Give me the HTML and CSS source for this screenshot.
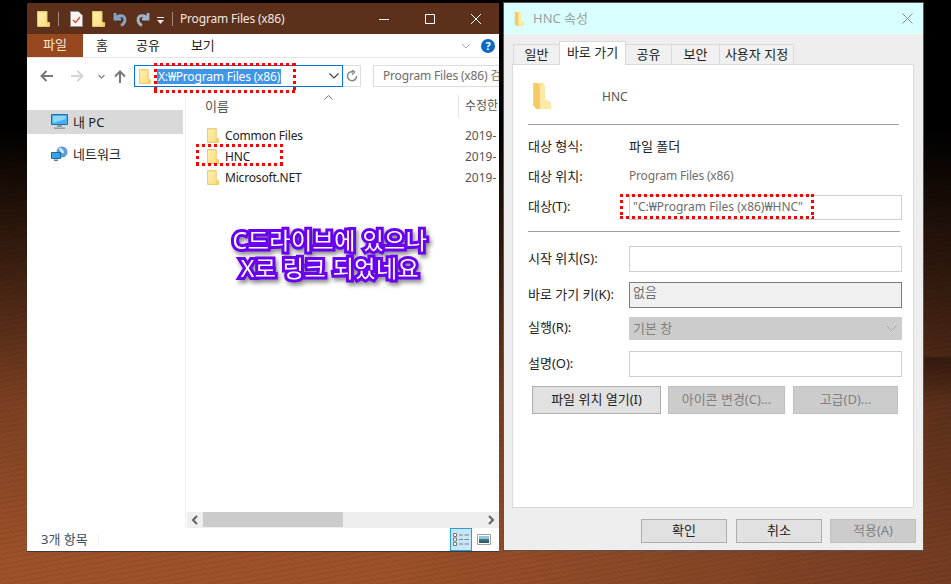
FILE: index.html
```html
<!DOCTYPE html>
<html lang="ko">
<head>
    <meta charset="UTF-8">
    <meta name="viewport" content="width=device-width, initial-scale=1.0">
    <title>HNC 속성</title>
    <link rel="stylesheet" href="styles.css">
</head>
<body>
    <!-- shared icons -->
    <svg class="defs" width="0" height="0">
        <defs>
            <linearGradient id="folder-fill" x1="0" y1="0" x2="1" y2="1">
                <stop offset="0" stop-color="#fff0b0"/>
                <stop offset="1" stop-color="#fbdc7c"/>
            </linearGradient>
            <symbol id="folder" viewBox="0 0 13 16">
                <path d="M.5.5h9.500v11h2.500v4h-12z" fill="url(#folder-fill)" stroke="#e6c568"/>
                <path d="M10 11.500v4h2.500v-4z" fill="#f3cf68"/>
                <path d="M.5.5h9.500v1h-9.500z" fill="#f0d588"/>
            </symbol>
            <symbol id="big-folder" viewBox="0 0 18 27">
                <path d="M0 0h10l2 3v14l6 3v7H3l-3-4z" fill="#fbdf8e"/>
                <path d="M0 0h4l3 3v24H3l-3-4z" fill="#f3ca66"/>
                <path d="M10 0l2 3v14l6 3v7H7V3z" fill="#fde9a8"/>
            </symbol>
        </defs>
    </svg>

    <div class="desktop">
        <!-- explorer window -->
        <div class="explorer">
            <div class="ex-title">
                <svg class="qa-folder" width="13" height="16"><use href="#folder"/></svg>
                <span class="qa-sep"></span>
                <svg class="qa-doc" width="13" height="16" viewBox="0 0 13 16">
                    <path d="M.5.5h8l4 4v11H.5z" fill="#f6f6f6" stroke="#9a8f88"/>
                    <path d="M3 9l2.500 2.500L10 6" fill="none" stroke="#e0502a" stroke-width="1.500"/>
                </svg>
                <svg class="qa-folder2" width="13" height="16"><use href="#folder"/></svg>
                <svg class="qa-undo" width="14" height="16" viewBox="0 0 14 16">
                    <path d="M2 2v6h6M3 7.500C5 3.500 12 3.500 12 9c0 3-2 4.500-4 5.500" fill="none" stroke="#84a5c8" stroke-width="2.800"/>
                </svg>
                <svg class="qa-redo" width="14" height="16" viewBox="0 0 14 16">
                    <path d="M12 2v6H6M11 7.500C9 3.500 2 3.500 2 9c0 3 2 4.500 4 5.500" fill="none" stroke="#9db4cc" stroke-width="2.800"/>
                </svg>
                <svg class="qa-more" width="7" height="7" viewBox="0 0 7 7">
                    <path d="M0 0h7v1H0zM0 3h7L3.500 7z" fill="#e8e8e8"/>
                </svg>
                <span class="qa-sep qa-sep2"></span>
                <span class="ex-name">Program Files (x86)</span>
                <div class="win-btns">
                    <svg width="12" height="12" viewBox="0 0 12 12"><path d="M1 6.500h10" stroke="#fff"/></svg>
                    <svg width="12" height="12" viewBox="0 0 12 12"><path d="M1.500 1.500h9v9h-9z" fill="none" stroke="#fff"/></svg>
                    <svg width="12" height="12" viewBox="0 0 12 12"><path d="M1 1l10 10M11 1L1 11" stroke="#fff"/></svg>
                </div>
            </div>

            <div class="ribbon">
                <span class="tab-file">파일</span>
                <span class="tab tab-home">홈</span>
                <span class="tab tab-share">공유</span>
                <span class="tab tab-view">보기</span>
                <svg class="rib-chev" width="10" height="6" viewBox="0 0 10 6"><path d="M1 1l4 4 4-4" fill="none" stroke="#a8a8a8"/></svg>
                <span class="help">?</span>
            </div>

            <div class="addr-row">
                <svg class="nav-arrow" width="14" height="12" viewBox="0 0 14 12"><path d="M13 6H2M6.500 1L1.500 6l5 5" fill="none" stroke="#777" stroke-width="2"/></svg>
                <svg class="nav-arrow fwd" width="14" height="12" viewBox="0 0 14 12"><path d="M1 6h11M7.500 1l5 5-5 5" fill="none" stroke="#d4d4d4" stroke-width="2"/></svg>
                <svg class="nav-down" width="7" height="5" viewBox="0 0 7 5"><path d="M.5 1l3 3 3-3" fill="none" stroke="#888" stroke-width="1.300"/></svg>
                <svg class="nav-up" width="12" height="13" viewBox="0 0 12 13"><path d="M6 13V2M1 6.500l5-5 5 5" fill="none" stroke="#777" stroke-width="2"/></svg>
                <div class="addr-box">
                    <svg width="12" height="15"><use href="#folder"/></svg>
                    <span class="addr-sel">X:₩Program Files (x86)</span>
                    <svg class="addr-chev" width="10" height="6" viewBox="0 0 10 6"><path d="M.5.5L5 5 9.500.5" fill="none" stroke="#444" stroke-width="1.200"/></svg>
                </div>
                <div class="refresh">
                    <svg width="12" height="12" viewBox="0 0 12 12"><path d="M7 1.800A4.500 4.500 0 1 0 10.500 6M6 0l2.500 2L6 4.500" fill="none" stroke="#888" stroke-width="1.500"/></svg>
                </div>
                <div class="search">Program Files (x86) 검</div>
            </div>

            <div class="ex-body">
                <div class="nav-pane">
                    <div class="nav-item selected">
                        <svg width="17" height="16" viewBox="0 0 17 16">
                            <path d="M.5.5h16v10H.5z" fill="#43b0f0" stroke="#2a6d9c"/>
                            <path d="M2 2h13v3L2 9z" fill="#8fd6fb"/>
                            <path d="M6 11h5v2H6zM3 13.500h11v1.500H3z" fill="#8ea0ae"/>
                        </svg>
                        <span>내 PC</span>
                    </div>
                    <div class="nav-item network">
                        <svg width="17" height="16" viewBox="0 0 17 16">
                            <circle cx="11" cy="6" r="5.500" fill="#5f9fd8"/>
                            <path d="M8 2c3 0 5 2 5 5-2 1-5-2-5-5z" fill="#cfe6f7"/>
                            <path d="M.5 6.500h9v6h-9z" fill="#3aa3e6" stroke="#1e6a9c"/>
                            <path d="M3 13.500h4v1.500H3z" fill="#5b7f99"/>
                        </svg>
                        <span>네트워크</span>
                    </div>
                </div>
                <div class="main-pane">
                    <div class="col-head">
                        <span class="col-name">이름</span>
                        <svg class="sort-caret" width="9" height="5" viewBox="0 0 9 5"><path d="M.5 4.500l4-4 4 4" fill="none" stroke="#777"/></svg>
                        <span class="col-date">수정한</span>
                    </div>
                    <div class="file-list">
                        <div class="file-row">
                            <svg width="12" height="15"><use href="#folder"/></svg>
                            <span class="file-name">Common Files</span>
                            <span class="file-date">2019-</span>
                        </div>
                        <div class="file-row">
                            <svg width="12" height="15"><use href="#folder"/></svg>
                            <span class="file-name">HNC</span>
                            <span class="file-date">2019-</span>
                        </div>
                        <div class="file-row">
                            <svg width="12" height="15"><use href="#folder"/></svg>
                            <span class="file-name">Microsoft.NET</span>
                            <span class="file-date">2019-</span>
                        </div>
                    </div>
                    <div class="hscroll">
                        <svg width="16" height="16" viewBox="0 0 16 16"><path d="M10 4L6 8l4 4" fill="none" stroke="#606060" stroke-width="2"/></svg>
                        <div class="hscroll-track"><div class="hscroll-thumb"></div></div>
                        <svg width="16" height="16" viewBox="0 0 16 16"><path d="M6 4l4 4-4 4" fill="none" stroke="#606060" stroke-width="2"/></svg>
                    </div>
                </div>
            </div>

            <div class="status">
                <span class="status-text">3개 항목</span>
                <span class="status-sep"></span>
                <div class="view-btn active">
                    <svg width="16" height="13" viewBox="0 0 16 13">
                        <path d="M.5.5h3v3h-3zM.5 5h3v3h-3zM.5 9.500h3v3h-3z" fill="#fff" stroke="#777"/>
                        <path d="M6 2h4M11.500 2H16M6 6.500h4M11.500 6.500H16M6 11h4M11.500 11H16" stroke="#6f8596"/>
                    </svg>
                </div>
                <div class="view-btn thumb-btn">
                    <svg width="14" height="11" viewBox="0 0 14 11">
                        <path d="M.5.5h13v10H.5z" fill="#fff" stroke="#a0a0a0"/>
                        <path d="M2 2h10v3H2z" fill="#8ec7ea"/>
                        <path d="M2 5h10v2H2z" fill="#3f7d5e"/>
                        <path d="M2 7h10v2H2z" fill="#2f5a78"/>
                    </svg>
                </div>
            </div>

            <div class="dots dots-addr"></div>
            <div class="dots dots-hnc"></div>
            <div class="caption">C드라이브에 있으나<br>X로 링크 되었네요</div>
        </div>

        <!-- properties dialog -->
        <div class="dialog">
            <div class="dlg-title">
                <svg width="11" height="14"><use href="#big-folder"/></svg>
                <span class="dlg-name">HNC 속성</span>
                <svg class="dlg-close" width="11" height="11" viewBox="0 0 11 11"><path d="M.5.5l10 10M10.500.5l-10 10" stroke="#7f8c8c"/></svg>
            </div>
            <div class="dlg-body">
                <div class="tabs">
                    <span class="dtab t1">일반</span>
                    <span class="dtab t2 on">바로 가기</span>
                    <span class="dtab t3">공유</span>
                    <span class="dtab t4">보안</span>
                    <span class="dtab t5">사용자 지정</span>
                </div>
                <div class="panel">
                    <div class="panel-head">
                        <svg width="18" height="26"><use href="#big-folder"/></svg>
                        <span>HNC</span>
                    </div>
                    <div class="rule"></div>
                    <div class="prop prop-info"><label>대상 형식:</label><span>파일 폴더</span></div>
                    <div class="prop prop-info"><label>대상 위치:</label><span class="muted">Program Files (x86)</span></div>
                    <div class="prop prop-target"><label>대상(T):</label><div class="field target-field">"C:₩Program Files (x86)₩HNC"</div></div>
                    <div class="rule rule2"></div>
                    <div class="prop prop-start"><label>시작 위치(S):</label><div class="field"></div></div>
                    <div class="prop prop-key"><label>바로 가기 키(K):</label><div class="field key-field">없음</div></div>
                    <div class="prop prop-run"><label>실행(R):</label>
                        <div class="field run-field">기본 창
                            <svg width="11" height="6" viewBox="0 0 11 6"><path d="M.5.5l5 5 5-5" fill="none" stroke="#a8a8a8"/></svg>
                        </div>
                    </div>
                    <div class="prop prop-desc"><label>설명(O):</label><div class="field"></div></div>
                    <div class="panel-btns">
                        <span class="btn open-btn">파일 위치 열기(I)</span>
                        <span class="btn off icon-btn">아이콘 변경(C)...</span>
                        <span class="btn off adv-btn">고급(D)...</span>
                    </div>
                </div>
                <div class="dlg-btns">
                    <span class="btn ok-btn">확인</span>
                    <span class="btn">취소</span>
                    <span class="btn off">적용(A)</span>
                </div>
            </div>
            <div class="dots dots-target"></div>
        </div>
    </div>
</body>
</html>
```

FILE: styles.css
```css
* {
    box-sizing: border-box;
}

body {
    margin: 0;
    padding: 0;
    overflow: hidden;
    font-family: "Noto Sans", "Noto Sans CJK KR", sans-serif;
    font-size: 13px;
    line-height: 16px;
    color: #222;
}

.defs {
    position: absolute;
}

svg {
    display: block;
    flex: none;
}

.desktop {
    position: relative;
    width: 951px;
    height: 584px;
    overflow: hidden;
    background-color: #8a4625;
    background-image:
        linear-gradient(180deg, transparent 356px, rgba(0, 0, 0, 0.32) 358px, transparent 405px),
        linear-gradient(180deg, #000 0, #000 130px, rgba(0, 0, 0, 0.52) 300px, rgba(0, 0, 0, 0.22) 400px, rgba(0, 0, 0, 0) 560px),
        repeating-linear-gradient(170deg, rgba(0, 0, 0, 0.035) 0 2px, rgba(255, 255, 255, 0.012) 2px 5px),
        linear-gradient(90deg, #9c5029, #9c5029 40%, #733b20);
    background-size: 28px 100%, 100% 100%, 100% 100%, 100% 100%;
    background-position: right top, 0 0, 0 0, 0 0;
    background-repeat: no-repeat;
}

/* red dotted marks, squares rather than the round dots of border: dotted */
.dots {
    position: absolute;
    background-image:
        repeating-linear-gradient(90deg, #f00 0 3px, transparent 3px 6px),
        repeating-linear-gradient(90deg, #f00 0 3px, transparent 3px 6px),
        repeating-linear-gradient(180deg, #f00 0 3px, transparent 3px 6px),
        repeating-linear-gradient(180deg, #f00 0 3px, transparent 3px 6px);
    background-size: 100% 3px, 100% 3px, 3px 100%, 3px 100%;
    background-position: 0 0, 0 100%, 0 0, 100% 0;
    background-repeat: no-repeat;
}

.dots-addr {
    left: 127px;
    top: 60px;
    width: 142px;
    height: 30px;
}

.dots-hnc {
    left: 169px;
    top: 141px;
    width: 87px;
    height: 22px;
}

.dots-target {
    left: 116px;
    top: 191px;
    width: 194px;
    height: 25px;
}

/* explorer window */
.explorer {
    position: absolute;
    left: 27px;
    top: 3px;
    width: 472px;
    height: 548px;
    display: flex;
    flex-direction: column;
    background: #fff;
    box-shadow: 0 1px 0 #3a3a3a;
}

.ex-title {
    height: 31px;
    flex: none;
    display: flex;
    align-items: center;
    background: #5c301a;
    color: #f0e8e2;
    padding-left: 10px;
}

.qa-sep {
    width: 1px;
    height: 14px;
    background: #a08a7c;
    margin-left: 8px;
}

.qa-doc {
    margin-left: 11px;
}

.qa-folder2 {
    margin-left: 9px;
}

.qa-undo {
    margin-left: 8px;
}

.qa-redo {
    margin-left: 9px;
}

.qa-more {
    margin-left: 7px;
    margin-top: 3px;
}

.qa-sep2 {
    margin-left: 8px;
}

/* latin-only strings run a little narrower than the hangul ones */
.ex-name,
.addr-sel,
.search,
.file-name,
.muted {
    font-size: 12px;
    letter-spacing: -0.18px;
}

.ex-name {
    margin-left: 7px;
}

.win-btns {
    margin-left: auto;
    display: flex;
    gap: 34px;
    padding-right: 17px;
}

.ribbon {
    height: 23px;
    flex: none;
    display: flex;
    align-items: center;
    box-shadow: 0 1px 0 #e4e4e4;
}

.tab-file {
    width: 56px;
    height: 23px;
    line-height: 21px;
    text-align: center;
    background: #97481f;
    color: #f5e6dc;
}

.tab {
    margin-top: -2px;
}

.tab-home {
    margin-left: 13px;
}

.tab-share {
    margin-left: 28px;
}

.tab-view {
    margin-left: 31px;
}

.rib-chev {
    margin-left: auto;
}

.help {
    width: 14px;
    height: 14px;
    margin: 0 4px 0 10px;
    border-radius: 50%;
    background: #0b6cc5;
    color: #fff;
    font-weight: 700;
    font-size: 11px;
    line-height: 14px;
    text-align: center;
}

.addr-row {
    height: 38px;
    flex: none;
    display: flex;
    align-items: flex-start;
    padding: 8px 0 0 13px;
}

.nav-arrow {
    margin-top: 5px;
}

.nav-arrow.fwd {
    margin-left: 16px;
}

.nav-down {
    margin: 9px 0 0 14px;
}

.nav-up {
    margin: 5px 0 0 9px;
}

.addr-box {
    width: 209px;
    height: 22px;
    flex: none;
    margin-left: 8px;
    border: 1px solid #0078d7;
    display: flex;
    align-items: center;
    padding-left: 4px;
}

.addr-sel {
    margin-left: 6px;
    padding: 0 1px;
    height: 15px;
    line-height: 15px;
    background: #3f95e8;
    color: #fff;
    white-space: nowrap;
}

.addr-chev {
    margin-left: auto;
    margin-right: 3px;
}

.refresh {
    width: 18px;
    height: 22px;
    flex: none;
    border: 1px solid #dcdcdc;
    border-left: 0;
    display: flex;
    align-items: center;
    justify-content: center;
}

.search {
    width: 126px;
    height: 22px;
    flex: none;
    margin-left: 12px;
    border: 1px solid #dcdcdc;
    border-right: 0;
    line-height: 20px;
    padding-left: 9px;
    color: #6d6d6d;
    white-space: nowrap;
    overflow: hidden;
}

.ex-body {
    flex: 1;
    display: flex;
    min-height: 0;
}

.nav-pane {
    width: 159px;
    flex: none;
    padding-top: 15px;
    border-right: 1px solid #efefef;
}

.nav-item {
    width: 156px;
    height: 24px;
    display: flex;
    align-items: center;
    gap: 5px;
    padding-left: 24px;
}

.nav-item span {
    margin-top: -1px;
}

.nav-item.selected {
    background: #d9d9d9;
}

.nav-item.network {
    margin-top: 8px;
}

.main-pane {
    flex: 1;
    min-width: 0;
    display: flex;
    flex-direction: column;
    overflow: hidden;
}

.col-head {
    position: relative;
    height: 23px;
    flex: none;
    display: flex;
    align-items: center;
    padding-left: 19px;
    color: #555;
    white-space: nowrap;
}

.col-name {
    margin-top: -2px;
}

.sort-caret {
    position: absolute;
    left: 138px;
    top: 0;
}

.col-date {
    position: absolute;
    left: 272px;
    top: 0;
    height: 23px;
    line-height: 21px;
    padding-left: 6px;
    border-left: 1px solid #e5e5e5;
    font-size: 12px;
}

.file-list {
    flex: 1;
    padding-top: 7px;
}

.file-row {
    height: 21px;
    display: flex;
    align-items: center;
    padding-left: 21px;
    white-space: nowrap;
}

.file-name {
    width: 240px;
    flex: none;
    margin-left: 6px;
}

.file-date {
    font-size: 12px;
    color: #555;
}

.hscroll {
    height: 16px;
    flex: none;
    display: flex;
    background: #eeeeee;
    margin-left: 1px;
}

.hscroll-track {
    flex: 1;
}

.hscroll-thumb {
    width: 140px;
    height: 15px;
    background: #cbcbcb;
}

.status {
    height: 23px;
    flex: none;
    display: flex;
    align-items: center;
    padding-left: 14px;
    color: #3f4f5f;
}

.status-text {
    margin-top: -2px;
}

.status-sep {
    width: 1px;
    height: 12px;
    margin-left: 10px;
    background: #eee;
}

.view-btn {
    width: 22px;
    height: 23px;
    display: flex;
    align-items: center;
    justify-content: center;
}

.view-btn.active {
    margin-left: auto;
    background: #c9e6f6;
    border: 1px solid #26a0da;
}

.thumb-btn {
    width: 14px;
    margin: 0 8px 0 5px;
}

.caption {
    position: absolute;
    left: 148px;
    top: 223px;
    width: 310px;
    text-align: center;
    font-size: 23px;
    line-height: 28px;
    letter-spacing: 0.5px;
    font-weight: 400;
    color: #fff;
    -webkit-text-stroke: 6px #6a00f0;
    paint-order: stroke fill;
    filter: drop-shadow(2px 3px 2px rgba(0, 0, 0, 0.45));
    white-space: nowrap;
}

/* properties dialog */
.dialog {
    position: absolute;
    left: 504px;
    top: 3px;
    width: 419px;
    height: 547px;
    display: flex;
    flex-direction: column;
    background: #eeeeee;
    box-shadow: 0 0 0 1px #555;
}

.dlg-title {
    height: 31px;
    flex: none;
    display: flex;
    align-items: center;
    background: #d9ffff;
    padding-left: 10px;
    color: #9a9f9f;
}

.dlg-name {
    margin: -2px 0 0 8px;
}

.dlg-close {
    margin-left: auto;
    margin-right: 10px;
}

.dlg-body {
    flex: 1;
    display: flex;
    flex-direction: column;
    padding: 8px 9px 0 8px;
}

.tabs {
    height: 23px;
    flex: none;
    display: flex;
    align-items: flex-end;
    padding-left: 1px;
    margin-bottom: -1px;
    position: relative;
    z-index: 1;
}

.dtab {
    height: 21px;
    line-height: 18px;
    text-align: center;
    border: 1px solid #d9d9d9;
    border-left: 0;
    background: #f0f0f0;
}

.dtab.t1 {
    width: 47px;
    border-left: 1px solid #d9d9d9;
}

.dtab.t2 {
    width: 67px;
}

.dtab.t3 {
    width: 46px;
}

.dtab.t4 {
    width: 48px;
}

.dtab.t5 {
    width: 74px;
}

.dtab.on {
    height: 24px;
    line-height: 20px;
    padding-bottom: 2px;
    background: #fff;
    border-bottom: 0;
    border-left: 1px solid #d9d9d9;
    margin-left: -1px;
}

.panel {
    width: 402px;
    height: 444px;
    flex: none;
    background: #fff;
    border: 1px solid #d9d9d9;
    padding: 18px 0 0 15px;
}

.panel-head {
    height: 26px;
    display: flex;
    align-items: center;
    gap: 51px;
    margin: 0 0 15px 5px;
    color: #555;
    font-size: 12px;
}

.panel-head span {
    margin-top: 1px;
}

.rule {
    width: 371px;
    height: 1px;
    background: #a0a0a0;
    margin-bottom: 11px;
}

.rule2 {
    width: 372px;
    margin: 11px 0 14px;
}

.prop {
    display: grid;
    grid-template-columns: 101px 273px;
    align-items: center;
}

.prop label {
    margin-top: -3px;
}

.prop-info {
    height: 20px;
    margin-bottom: 10px;
}

.prop-info label {
    margin-top: 0;
}

.prop-target {
    margin-top: -1px;
    height: 25px;
}

.prop-key {
    margin-top: 10px;
}

.prop-run {
    margin-top: 9px;
}

.prop-desc {
    margin-top: 11px;
}

.muted {
    color: #6d6d6d;
}

.field {
    height: 26px;
    border: 1px solid #cfcfcf;
    background: #fff;
    padding-left: 3px;
    line-height: 22px;
    white-space: nowrap;
}

.target-field {
    height: 25px;
    font-size: 12px;
    color: #6d6d6d;
}

.key-field {
    background: #f0f0f0;
    border-color: #7a7a7a;
    color: #6d6d6d;
    line-height: 19px;
}

.run-field {
    height: 23px;
    background: #cccccc;
    border-color: #cccccc;
    color: #808080;
    display: flex;
    align-items: center;
    justify-content: space-between;
    padding: 0 4px 2px 3px;
}

.btn {
    height: 24px;
    line-height: 20px;
    text-align: center;
    background: #e1e1e1;
    border: 1px solid #adadad;
    white-space: nowrap;
}

.btn.off {
    background: #cccccc;
    border-color: #bfbfbf;
    color: #808080;
}

.panel-btns {
    display: flex;
    margin: 9px 0 0 4px;
}

.panel-btns .btn {
    height: 28px;
    line-height: 24px;
}

.open-btn {
    width: 129px;
}

.icon-btn {
    width: 117px;
    margin-left: 7px;
}

.adv-btn {
    width: 105px;
    margin-left: 8px;
}

.dlg-btns {
    display: flex;
    justify-content: flex-end;
    gap: 8px;
    margin: 11px -2px 0 0;
}

.dlg-btns .btn {
    width: 86px;
}

.ok-btn {
    margin-right: 1px;
}
```
